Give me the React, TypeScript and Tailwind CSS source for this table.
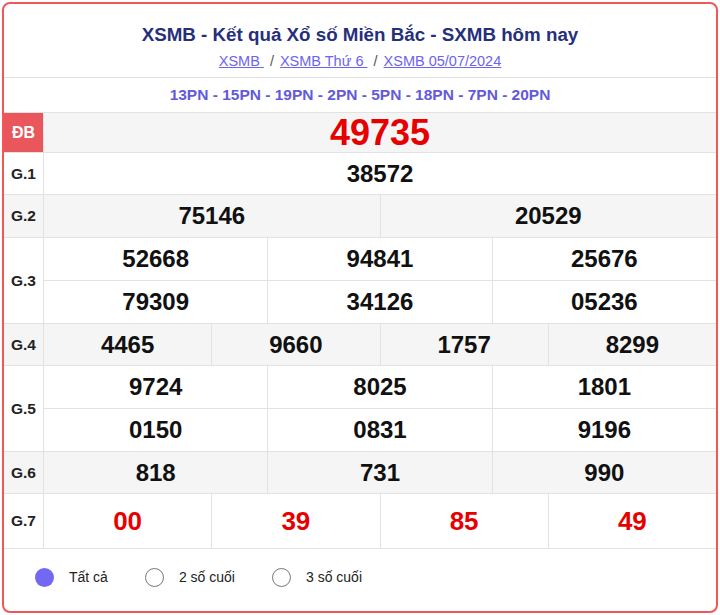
import { useState } from "react";

type Cell = { value: string; red?: boolean };

const font = { fontFamily: '"Liberation Sans", Arial, sans-serif' };

function ResultRow({
  label,
  rows,
  gray,
  heightClass,
  numClass,
}: {
  label: string;
  rows: Cell[][];
  gray?: boolean;
  heightClass: string;
  numClass: string;
}) {
  return <div className={`flex border-b border-[#e2e2e2] ${gray ? "bg-[#f5f5f5]" : "bg-white"}`}>
    <div className="flex w-[40px] shrink-0 items-center justify-center border-r border-[#e2e2e2] text-[15.5px] font-bold text-[#222]">{label}</div>
    <div className="flex flex-1 flex-col">
      {rows.map((cells, i) => <div key={i} className={`flex ${i < rows.length - 1 ? "border-b border-[#e2e2e2]" : ""}`}>
        {cells.map((cell, j) => <div
          key={j}
          className={`flex flex-1 items-center justify-center ${heightClass} ${numClass} font-bold ${j < cells.length - 1 ? "border-r border-[#e2e2e2]" : ""} ${cell.red ? "text-[#e60000]" : "text-[#111]"}`}
        >{cell.value}</div>)}
      </div>)}
    </div>
  </div>;
}

const c = (...values: string[]) => values.map((value) => ({ value }));

export default function App() {
  const [mode, setMode] = useState(0);
  const options = ["Tất cả", "2 số cuối", "3 số cuối"];

  return <div className="bg-white p-[2px]" style={font}>
    <div className="overflow-hidden rounded-[8px] border-2 border-[#f25656] bg-white">
      <div className="flex h-[74px] flex-col items-center border-b border-[#e2e2e2] pt-[19px]">
        <h1 className="text-[18.75px] font-bold leading-[24px] text-[#262f7c]">XSMB - Kết quả Xổ số Miền Bắc - SXMB hôm nay</h1>
        <div className="mt-[5px] flex items-center gap-[6px] text-[14.5px] leading-[18px] text-[#6b63f2]">
          <a className="underline">XSMB&nbsp;</a>
          <span className="text-[#555]">/</span>
          <a className="underline">XSMB Thứ 6&nbsp;</a>
          <span className="text-[#555]">/</span>
          <a className="underline">XSMB 05/07/2024</a>
        </div>
      </div>
      <div className="flex h-[35px] items-center justify-center border-b border-[#e2e2e2] text-[15.5px] font-bold text-[#6259dc]">
        13PN - 15PN - 19PN - 2PN - 5PN - 18PN - 7PN - 20PN
      </div>

      <div className="flex border-b border-[#e2e2e2] bg-[#f5f5f5]">
        <div className="flex h-[39px] w-[40px] shrink-0 items-center justify-center border-r border-[#e2e2e2] bg-[#e9565b] text-[16px] font-bold text-white">ĐB</div>
        <div className="flex flex-1 items-center justify-center text-[36px] font-bold leading-none text-[#e60000]">49735</div>
      </div>

      <ResultRow label="G.1" rows={[c("38572")]} heightClass="h-[41px]" numClass="text-[24px]" />
      <ResultRow label="G.2" gray rows={[c("75146", "20529")]} heightClass="h-[42px]" numClass="text-[24px]" />
      <ResultRow label="G.3" rows={[c("52668", "94841", "25676"), c("79309", "34126", "05236")]} heightClass="h-[42px]" numClass="text-[24px]" />
      <ResultRow label="G.4" gray rows={[c("4465", "9660", "1757", "8299")]} heightClass="h-[41px]" numClass="text-[24px]" />
      <ResultRow label="G.5" rows={[c("9724", "8025", "1801"), c("0150", "0831", "9196")]} heightClass="h-[42px]" numClass="text-[24px]" />
      <ResultRow label="G.6" gray rows={[c("818", "731", "990")]} heightClass="h-[41px]" numClass="text-[24px]" />
      <ResultRow
        label="G.7"
        rows={[["00", "39", "85", "49"].map((value) => ({ value, red: true }))]}
        heightClass="h-[54px]"
        numClass="text-[26px]"
      />

      <div className="flex h-[62px] items-center pb-[5px] pl-[31px] text-[14px] text-[#222]">
        {options.map((option, i) => <label key={option} className={`flex cursor-pointer items-center ${i > 0 ? "ml-[37px]" : ""}`} onClick={() => setMode(i)}>
          <span className={`h-[19px] w-[19px] rounded-full ${mode === i ? "bg-[#7368f2]" : "border border-[#767676] bg-white"}`} />
          <span className="ml-[15px]">{option}</span>
        </label>)}
      </div>
    </div>
  </div>;
}
